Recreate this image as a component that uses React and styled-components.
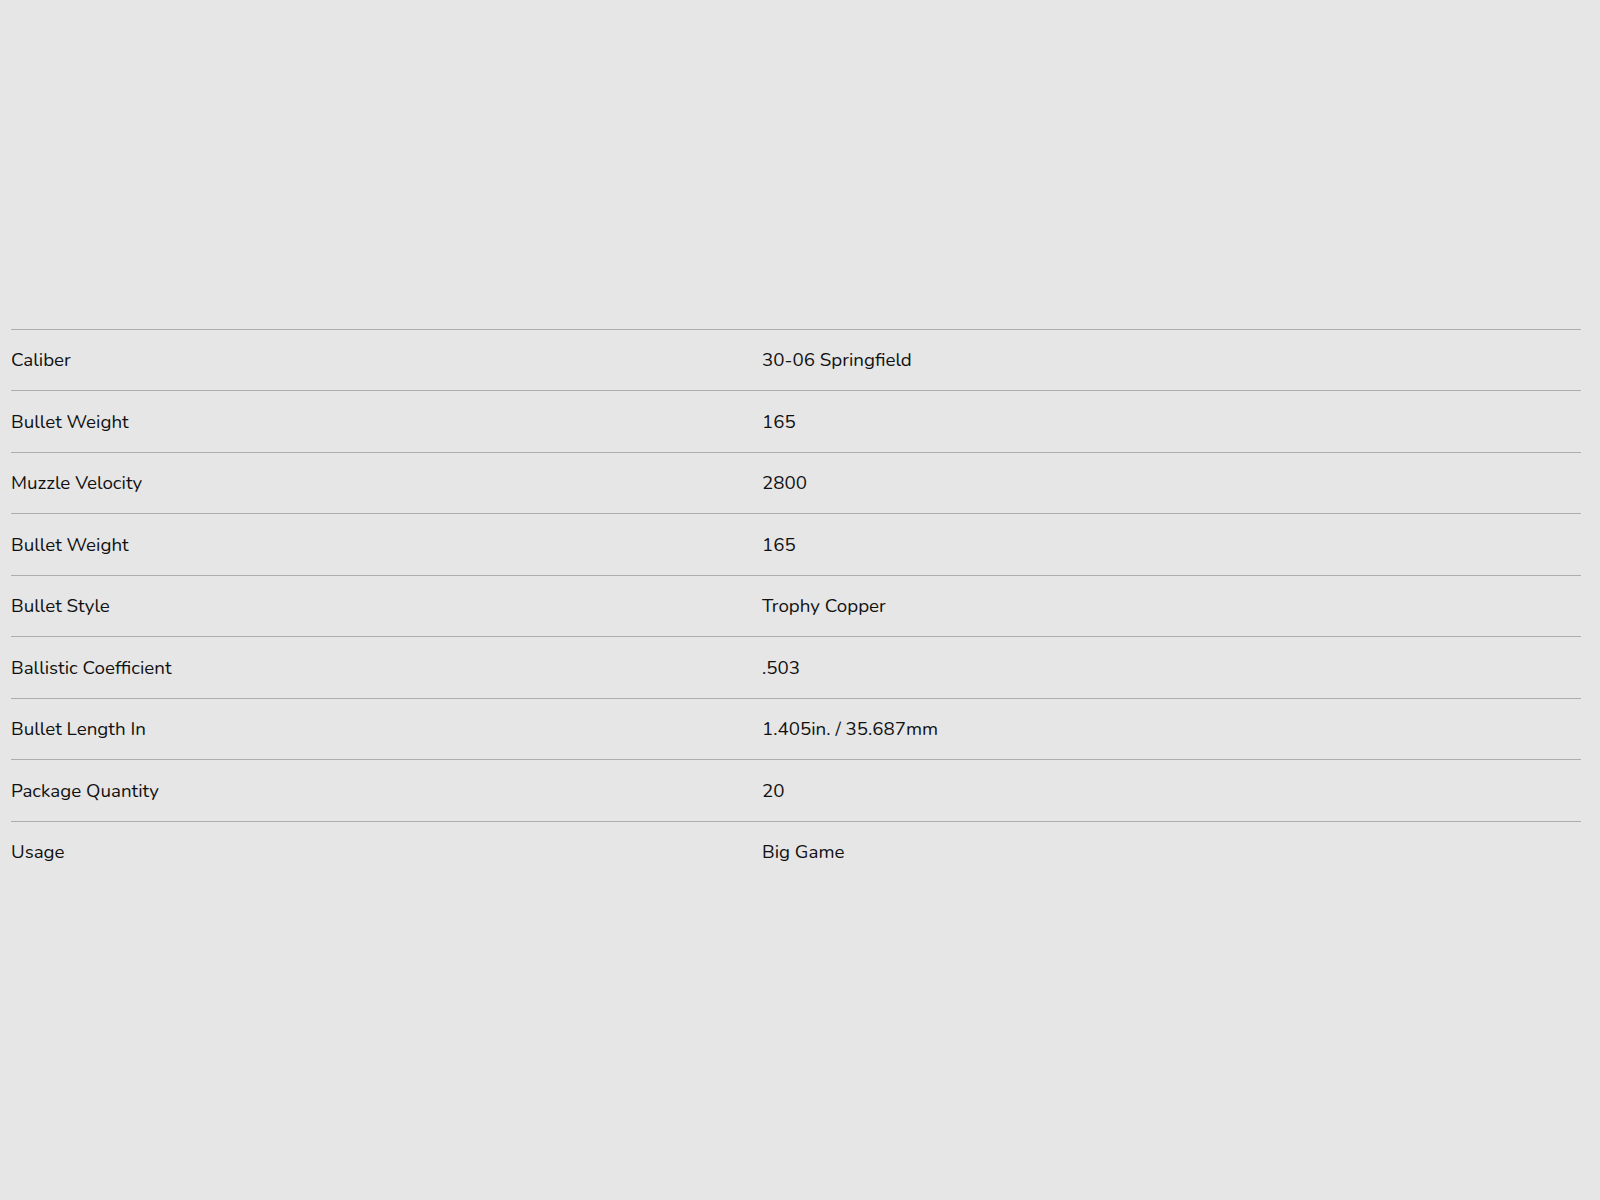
import React from 'react';
import styled, { createGlobalStyle } from 'styled-components';

const GlobalStyle = createGlobalStyle`
  html, body {
    margin: 0;
    padding: 0;
    background-color: #e6e6e6;
  }
  body {
    font-family: 'Nunito', 'Lato', 'Noto Sans', sans-serif;
    color: #111111;
  }
`;

const Page = styled.div`
  min-height: 1200px;
  padding: 328.5px 19px 0 11px;
  box-sizing: border-box;
`;

const SpecTable = styled.div`
  display: flex;
  flex-direction: column;
  border-top: 1px solid #adadad;
`;

const SpecRow = styled.div`
  display: grid;
  grid-template-columns: 751px 1fr;
  padding: 17.5px 0 16px;
  line-height: 27px;
  font-size: 18.75px;
  border-bottom: ${({ $last }) => ($last ? 'none' : '1px solid #adadad')};
`;

const Label = styled.div`
  color: #111111;
`;

const Value = styled.div`
  color: #111111;
`;

const specs = [
  ['Caliber', '30-06 Springfield'],
  ['Bullet Weight', '165'],
  ['Muzzle Velocity', '2800'],
  ['Bullet Weight', '165'],
  ['Bullet Style', 'Trophy Copper'],
  ['Ballistic Coefficient', '.503'],
  ['Bullet Length In', '1.405in. / 35.687mm'],
  ['Package Quantity', '20'],
  ['Usage', 'Big Game'],
];

export default function App() {
  return (
    <>
      <GlobalStyle />
      <Page>
        <SpecTable>
          {specs.map(([label, value], i) => (
            <SpecRow key={i} $last={i === specs.length - 1}>
              <Label>{label}</Label>
              <Value>{value}</Value>
            </SpecRow>
          ))}
        </SpecTable>
      </Page>
    </>
  );
}
